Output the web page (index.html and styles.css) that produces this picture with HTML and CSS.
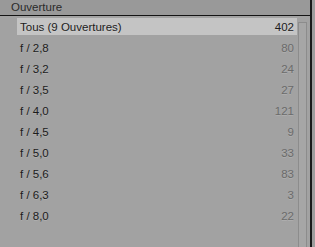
FILE: index.html
```html
<!DOCTYPE html>
<html lang="fr">
  <head>
    <meta charset="UTF-8" />
    <title>Ouverture</title>
    <link rel="stylesheet" href="styles.css">
  </head>
  <body>
    <div class="panel">
      <div class="header">Ouverture</div>
      <div class="content">
        <ul class="list">
          <li class="row selected"><span>Tous (9 Ouvertures)</span><span class="count">402</span></li>
          <li class="row"><span>f / 2,8</span><span class="count">80</span></li>
          <li class="row"><span>f / 3,2</span><span class="count">24</span></li>
          <li class="row"><span>f / 3,5</span><span class="count">27</span></li>
          <li class="row"><span>f / 4,0</span><span class="count">121</span></li>
          <li class="row"><span>f / 4,5</span><span class="count">9</span></li>
          <li class="row"><span>f / 5,0</span><span class="count">33</span></li>
          <li class="row"><span>f / 5,6</span><span class="count">83</span></li>
          <li class="row"><span>f / 6,3</span><span class="count">3</span></li>
          <li class="row"><span>f / 8,0</span><span class="count">22</span></li>
        </ul>
        <div class="scroll"><div class="track"></div></div>
        <div class="edge"></div>
      </div>
    </div>
  </body>
</html>
```

FILE: styles.css
```css
body {
  margin: 0;
  background: #a2a2a2;
  font-family: "Lucida Grande", "Liberation Sans", sans-serif;
  font-size: 11.5px;
  color: #1c1c1c;
}

.panel {
  width: 315px;
  height: 247px;
  display: flex;
  flex-direction: column;
  overflow: hidden;
}

.header {
  height: 15px;
  line-height: 15px;
  padding-left: 11px;
  background: #999999;
  border-bottom: 1px solid #141414;
  color: #2a2a2a;
}

.content {
  flex: 1;
  display: flex;
}

.list {
  list-style: none;
  margin: 0;
  padding: 2px 0 0 17px;
  flex: 1;
}

.row {
  height: 17px;
  margin-bottom: 4px;
  display: flex;
  justify-content: space-between;
  align-items: center;
  padding: 0 3px;
  text-shadow: 0 1px 0 rgba(255, 255, 255, 0.15);
}

.row.selected {
  background: #c4c4c4;
}

.count {
  color: #6b6b6b;
}

.selected .count {
  color: #1c1c1c;
}

.scroll {
  width: 13px;
  padding: 6px 3px 0 1px;
  box-sizing: border-box;
}

.track {
  height: 100%;
  border: 1px solid #8c8c8c;
  background: #a6a6a6;
}

.edge {
  width: 5px;
  border-left: 2px solid #1a1a1a;
  background: #9e9e9e;
  box-sizing: border-box;
  margin-top: -16px;
}
```
